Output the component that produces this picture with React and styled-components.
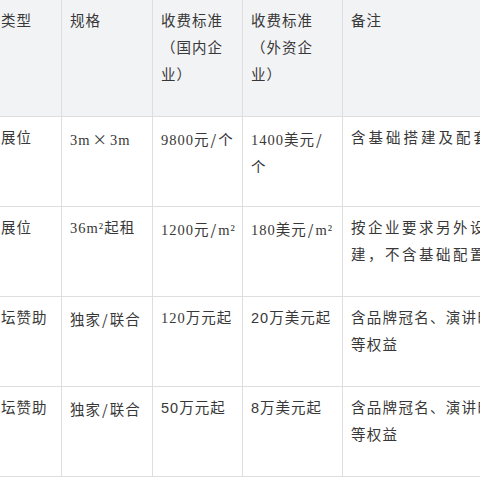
import React from "react";
import styled, { createGlobalStyle } from "styled-components";

const GlobalStyle = createGlobalStyle`
  html, body {
    margin: 0;
    padding: 0;
    background: #ffffff;
  }
  body {
    width: 480px;
    height: 480px;
    overflow: hidden;
  }
`;

const Viewport = styled.div`
  width: 480px;
  height: 480px;
  overflow: hidden;
  background: #ffffff;
`;

const Table = styled.table`
  border-collapse: collapse;
  table-layout: fixed;
  margin: -1px 0 0 -39px;
  width: 580px;
  font-family: "Noto Sans CJK SC", "Liberation Sans", sans-serif;
  font-size: 14.5px;
  line-height: 27px;
  letter-spacing: 1px;
  color: #383838;
`;

const HeadRow = styled.tr`
  height: 117px;
  background: #f2f3f5;
`;

const BodyRow = styled.tr`
  height: 90px;
  background: #ffffff;
`;

const Cell = styled.td`
  vertical-align: top;
  padding: 8px 8px;
  border: 1px solid #dedede;
  white-space: nowrap;
  overflow: hidden;
  letter-spacing: ${(p) => p.$spacing ?? 1}px;
  font-family: ${(p) =>
    p.$serif
      ? `"Liberation Serif", "Noto Sans CJK SC", serif`
      : `"Liberation Sans", "Noto Sans CJK SC", sans-serif`};
`;

const HeadCell = styled(Cell).attrs({ as: "th" })`
  font-weight: 400;
  text-align: left;
`;

const Sym = styled.span`
  font-family: "Noto Sans CJK SC", sans-serif;
  margin: 0 ${(p) => p.$gap ?? 1}px;
`;

const columns = [100, 91, 90, 100, 199];

const header = [
  "项目类型",
  "规格",
  <>收费标准<br />（国内企<br />业）</>,
  <>收费标准<br />（外资企<br />业）</>,
  "备注",
];

const slash = <Sym>/</Sym>;

const rows = [
  [
    { t: "标准展位" },
    { t: <>3m<Sym $gap={2}>×</Sym>3m</>, serif: true },
    { t: <>9800元{slash}个</>, serif: true },
    { t: <>1400美元{slash}<br />个</>, serif: true },
    { t: "含基础搭建及配套设施", spacing: 3 },
  ],
  [
    { t: "特装展位" },
    { t: "36m²起租", serif: true },
    { t: <>1200元{slash}m²</>, serif: true },
    { t: <>180美元{slash}m²</>, serif: true },
    { t: <>按企业要求另外设计搭<br />建，不含基础配置</>, spacing: 2.5 },
  ],
  [
    { t: "主论坛赞助" },
    { t: <>独家{slash}联合</> },
    { t: "120万元起", serif: true },
    { t: "20万美元起" },
    { t: <>含品牌冠名、演讲时段<br />等权益</>, spacing: 1.3 },
  ],
  [
    { t: "分论坛赞助" },
    { t: <>独家{slash}联合</> },
    { t: "50万元起" },
    { t: "8万美元起" },
    { t: <>含品牌冠名、演讲时段<br />等权益</>, spacing: 1.3 },
  ],
];

export default function App() {
  return (
    <>
      <GlobalStyle />
      <Viewport>
        <Table>
          <colgroup>
            {columns.map((w, i) => (
              <col key={i} style={{ width: w }} />
            ))}
          </colgroup>
          <thead>
            <HeadRow>
              {header.map((h, i) => (
                <HeadCell key={i}>{h}</HeadCell>
              ))}
            </HeadRow>
          </thead>
          <tbody>
            {rows.map((row, r) => (
              <BodyRow key={r}>
                {row.map((c, i) => (
                  <Cell key={i} $serif={c.serif} $spacing={c.spacing}>
                    {c.t}
                  </Cell>
                ))}
              </BodyRow>
            ))}
          </tbody>
        </Table>
      </Viewport>
    </>
  );
}
